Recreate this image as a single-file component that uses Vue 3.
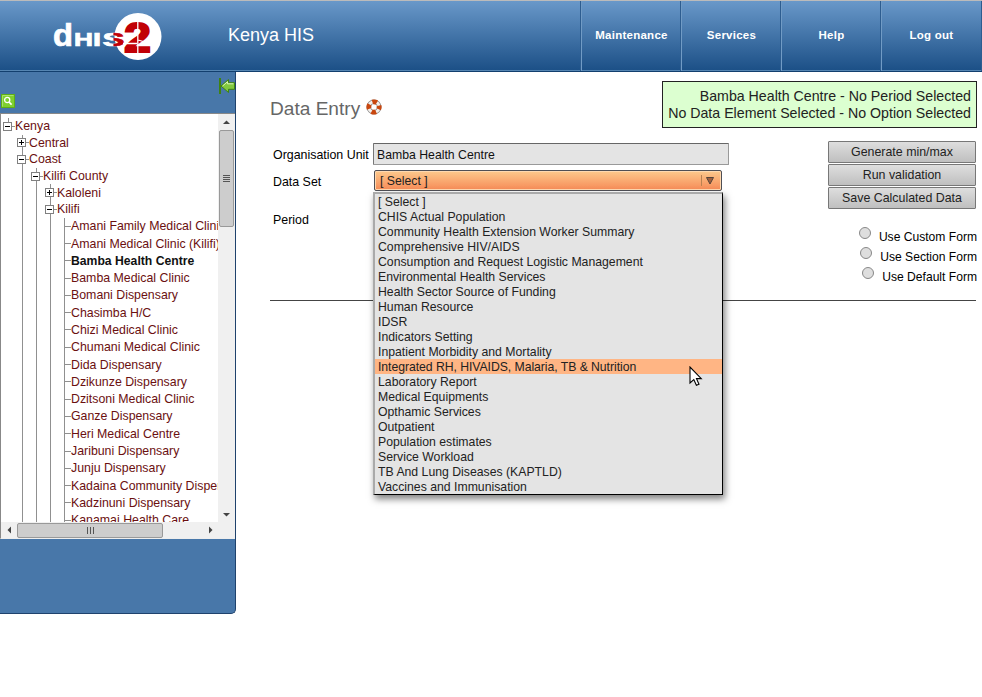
<script setup>
const nav = ['Maintenance', 'Services', 'Help', 'Log out']
const branches = [
  { level: 0, name: 'Kenya', open: true },
  { level: 1, name: 'Central', open: false },
  { level: 1, name: 'Coast', open: true },
  { level: 2, name: 'Kilifi County', open: true },
  { level: 3, name: 'Kaloleni', open: false },
  { level: 3, name: 'Kilifi', open: true },
]
const leaves = [
  'Amani Family Medical Clinic', 'Amani Medical Clinic (Kilifi)', 'Bamba Health Centre',
  'Bamba Medical Clinic', 'Bomani Dispensary', 'Chasimba H/C', 'Chizi Medical Clinic',
  'Chumani Medical Clinic', 'Dida Dispensary', 'Dzikunze Dispensary', 'Dzitsoni Medical Clinic',
  'Ganze Dispensary', 'Heri Medical Centre', 'Jaribuni Dispensary', 'Junju Dispensary',
  'Kadaina Community Dispensary', 'Kadzinuni Dispensary', 'Kanamai Health Care',
]
const options = [
  '[ Select ]', 'CHIS Actual Population', 'Community Health Extension Worker Summary',
  'Comprehensive HIV/AIDS', 'Consumption and Request Logistic Management',
  'Environmental Health Services', 'Health Sector Source of Funding', 'Human Resource', 'IDSR',
  'Indicators Setting', 'Inpatient Morbidity and Mortality',
  'Integrated RH, HIVAIDS, Malaria, TB & Nutrition', 'Laboratory Report', 'Medical Equipments',
  'Opthamic Services', 'Outpatient', 'Population estimates', 'Service Workload',
  'TB And Lung Diseases (KAPTLD)', 'Vaccines and Immunisation',
]
const hovered = 11
const actions = ['Generate min/max', 'Run validation', 'Save Calculated Data']
const forms = ['Use Custom Form', 'Use Section Form', 'Use Default Form']
</script>

<template>
  <div class="page">
    <header class="top">
      <svg class="logo" width="112" height="52" viewBox="0 0 112 52">
        <circle cx="85" cy="26.5" r="23.5" fill="#fff" />
        <g font-family="Liberation Sans" font-weight="bold" stroke-width=".7">
          <text x="0" y="36" font-size="31" fill="#fff" stroke="#fff" textLength="20" lengthAdjust="spacingAndGlyphs">d</text>
          <text x="21" y="36" font-size="18.5" fill="#fff" stroke="#fff" textLength="19" lengthAdjust="spacingAndGlyphs">H</text>
          <text x="40" y="36" font-size="18.5" fill="#fff" stroke="#fff" textLength="8" lengthAdjust="spacingAndGlyphs">I</text>
          <text x="49.5" y="36" font-size="18.5" fill="#fff" stroke="#fff" textLength="22" lengthAdjust="spacingAndGlyphs">S</text>
          <text class="red-half" x="49.5" y="36" font-size="18.5" fill="#c10006" stroke="#c10006" textLength="22" lengthAdjust="spacingAndGlyphs">S</text>
          <text x="71" y="42" font-size="43" fill="#c10006" stroke="#c10006" stroke-width="2" textLength="27" lengthAdjust="spacingAndGlyphs">2</text>
        </g>
        <path d="M84.8 9V44 M70 33.5H84 M85 30L99 34" stroke="#fff" stroke-width="1.3" fill="none" />
      </svg>
      <div class="brand">Kenya HIS</div>
      <nav class="nav">
        <a v-for="n in nav" :key="n">{{ n }}</a>
      </nav>
    </header>

    <div class="body">
      <aside class="side">
        <div class="tools">
          <svg width="14" height="14" viewBox="0 0 14 14">
            <rect x=".5" y=".5" width="13" height="13" fill="#7fd02f" stroke="#5fae16" />
            <path d="M1.5 12.5V1.5H12.5" fill="none" stroke="#a8e36a" />
            <circle cx="6.2" cy="6" r="2.6" fill="none" stroke="#fff" stroke-width="1.3" />
            <path d="M8 8L10.6 10.6" stroke="#fff" stroke-width="1.7" />
          </svg>
          <svg class="hide" width="16" height="16" viewBox="0 0 16 16">
            <rect x="0" y="0" width="2" height="16" fill="#3f8312" />
            <path d="M2 8L9.5 1.5V4.7H15.5V11.3H9.5V14.5Z" fill="#82c93f" stroke="#3f8312" />
            <path d="M3.6 8L8.5 3.7V5.8H14.4" fill="none" stroke="#d8f3b8" />
          </svg>
        </div>
        <div class="treebox">
          <div class="tree">
            <div v-for="b in branches" :key="b.name" class="row">
              <i v-for="k in b.level" :key="k" class="cell" :class="{ line: k > 1 }"></i>
              <i class="cell own" :class="b.level ? 'line' : 'stub'">
                <svg width="14" height="9" viewBox="0 0 14 9">
                  <rect x="2.5" y=".5" width="8" height="8" fill="#fff" stroke="#808080" />
                  <path d="M4 4.5H9" stroke="#000" />
                  <path v-if="!b.open" d="M6.5 2V7" stroke="#000" />
                  <path d="M11 4.5H14" stroke="#909090" />
                </svg>
              </i>
              <span>{{ b.name }}</span>
            </div>
            <div v-for="l in leaves" :key="l" class="row leaf" :class="{ sel: l === 'Bamba Health Centre' }">
              <i class="cell"></i><i class="cell line"></i><i class="cell line"></i><i class="cell line"></i>
              <i class="cell line own"><b class="tick"></b></i>
              <span>{{ l }}</span>
            </div>
          </div>
          <div class="vbar">
            <svg width="17" height="16" viewBox="0 0 17 16"><path d="M5 10L8.5 6.5L12 10Z" fill="#444" /></svg>
            <div class="vthumb"><i></i><i></i><i></i><i></i></div>
            <svg class="end" width="17" height="16" viewBox="0 0 17 16"><path d="M5 7L8.5 10.5L12 7Z" fill="#444" /></svg>
          </div>
          <div class="hbar">
            <svg width="16" height="16" viewBox="0 0 16 16"><path d="M10 4.5L6.5 8L10 11.5Z" fill="#444" /></svg>
            <div class="hthumb"><i></i><i></i><i></i></div>
            <svg class="end" width="16" height="16" viewBox="0 0 16 16"><path d="M7 4.5L10.5 8L7 11.5Z" fill="#444" /></svg>
          </div>
          <div class="corner"></div>
        </div>
      </aside>

      <main class="main">
        <div class="titlebar">
          <h1>Data Entry</h1>
          <svg class="help" width="16" height="16" viewBox="0 0 16 16">
            <circle cx="8" cy="8" r="5.2" fill="none" stroke="#8b8b8b" stroke-width="4.6" />
            <circle cx="8" cy="8" r="5.2" fill="none" stroke="#f5f0ec" stroke-width="3" />
            <circle cx="8" cy="8" r="5.2" fill="none" stroke="#c9470f" stroke-width="4.8" stroke-dasharray="4.6 3.568" stroke-dashoffset="2.3" />
          </svg>
          <div class="info">
            <div>Bamba Health Centre - No Period Selected</div>
            <div>No Data Element Selected - No Option Selected</div>
          </div>
        </div>

        <div class="work">
          <div class="form">
            <label>Organisation Unit</label>
            <div class="input">Bamba Health Centre</div>
            <label>Data Set</label>
            <div class="selectwrap">
              <div class="select">
                <span>[ Select ]</span>
                <svg width="14" height="12" viewBox="0 0 14 12">
                  <path d="M.5 0V11" stroke="#b98252" />
                  <path d="M5.5 2.5H12.5L9 9Z" fill="#a0603f" stroke="#55443a" />
                </svg>
              </div>
              <div class="menu">
                <div v-for="(o, i) in options" :key="o" class="opt" :class="{ hot: i === hovered }">{{ o }}</div>
                <svg class="cursor" width="14" height="22" viewBox="0 0 14 22">
                  <path d="M1 1V17L4.8 13.6L7.4 19.3L10 18.2L7.5 12.6H12.3Z" fill="#fff" stroke="#000" stroke-width="1.1" />
                </svg>
              </div>
            </div>
            <label class="period">Period</label>
          </div>
          <div class="right">
            <button v-for="a in actions" :key="a">{{ a }}</button>
            <div class="radios">
              <div v-for="f in forms" :key="f" class="radio"><i></i><span>{{ f }}</span></div>
            </div>
          </div>
        </div>
      </main>
    </div>
  </div>
</template>

<style>
body { margin: 0; background: #fff; }
</style>

<style scoped>
.page { width: 982px; height: 697px; overflow: hidden; font: 12.25px/15px "Liberation Sans", Arial, sans-serif; color: #000; box-sizing: border-box; }
.page * { box-sizing: border-box; }
svg { display: block; flex: none; }
.top { height: 72px; display: flex; border-top: 1px solid #bbb; border-bottom: 1px solid #123f6e; background: linear-gradient(#6998c9, #1b4f86); box-shadow: inset 0 -1px #5585b2; }
.logo { margin: 9px 0 0 53px; }
.red-half { clip-path: inset(0 0 0 50%); }
.brand { margin: 23px 0 0 63px; width: 200px; font-size: 18px; line-height: 23px; color: #fff; }
.nav { margin-left: auto; display: flex; padding-right: 1px; border-right: 1px solid #2d5d90; }
.nav a { width: 100px; border-left: 1px solid #2d5d90; box-shadow: inset 1px 0 #719bc5; color: #fff; font-weight: bold; font-size: 11.5px; letter-spacing: .25px; text-align: center; line-height: 68px; height: 70px; padding-left: 2px; }
.body { display: flex; }
.side { width: 236px; height: 542px; background: #4877a9; border-right: 1px solid #1f426c; border-bottom: 1px solid #1f426c; border-radius: 0 0 5px 0; }
.tools { height: 41px; display: flex; align-items: flex-start; justify-content: space-between; padding-left: 1px; }
.tools svg { margin-top: 22px; }
.tools .hide { margin-top: 6px; }
.treebox { height: 426px; background: #fff; border-top: 1px solid #888; border-left: 1px solid #888; display: grid; grid-template: 408px 16px / 217px 17px; border-bottom: 1px solid #eee; }
.tree { overflow: hidden; padding-top: 4px; font-size: 12.35px; }
.row { display: flex; height: 16.6px; align-items: center; white-space: nowrap; color: #6b1010; }
.row span { padding-top: 1px; }
.leaf { height: 17.3px; }
.sel span { color: #111; font-weight: bold; font-size: 12.2px; }
.cell { flex: none; width: 14px; align-self: stretch; display: flex; align-items: center; }
.line { background: linear-gradient(#909090, #909090) 7px 0 / 1px 100% no-repeat; }
.stub { background: linear-gradient(#909090, #909090) 7px 0 / 1px 50% no-repeat; }
.tick { width: 7px; height: 1px; margin-left: 7px; background: #909090; }
.vbar { background: #f0f0f0; display: flex; flex-direction: column; align-items: center; }
.vthumb { width: 15px; height: 97px; border: 1px solid #999; border-radius: 2px; background: #cdcdcd; display: flex; flex-direction: column; align-items: center; justify-content: center; gap: 1px; }
.vthumb i { width: 7px; height: 1px; background: #555; }
.end { margin-top: auto; }
.hbar { background: #f0f0f0; display: flex; align-items: center; }
.hthumb { width: 146px; height: 15px; border: 1px solid #999; border-radius: 2px; background: #cdcdcd; display: flex; align-items: center; justify-content: center; gap: 2px; }
.hthumb i { height: 7px; width: 1px; background: #555; }
.hbar .end { margin: 0 0 0 auto; }
.corner { background: #f0f0f0; }
.main { width: 746px; padding: 9px 5px 0 34px; }
.titlebar { display: flex; height: 47px; align-items: flex-start; }
h1 { margin: 16px 6px 0 0; font-size: 19.1px; line-height: 23px; font-weight: normal; color: #666; white-space: nowrap; }
.help { margin-top: 18px; }
.info { margin-left: auto; width: 315px; height: 47px; border: 1px solid #222; background: #dcffd0; padding: 6px 5px; text-align: right; font-size: 14.2px; line-height: 17px; color: #222; white-space: nowrap; }
.work { display: flex; justify-content: space-between; height: 173px; margin-right: 1px; border-bottom: 1px solid #444; padding-top: 13px; }
.form { display: grid; grid-template-columns: 100px 356px; grid-template-rows: 26px 28px 46px; align-items: center; padding: 0 0 0 3px; height: 100px; }
label { font-size: 12.4px; padding-top: 2px; }
.input { height: 22px; border: 1px solid #999; border-top-color: #666; border-left-color: #777; border-radius: 1px; background: #e4e4e4; padding-left: 3px; line-height: 22px; color: #111; }
.selectwrap { position: relative; width: 348px; margin-left: 1px; align-self: start; margin-top: 3px; }
.select { height: 21px; border: 1px solid #4f4f55; border-radius: 2px; background: linear-gradient(#fdc98c, #f68b57); box-shadow: inset 0 0 0 1px #ffd9b0; display: flex; align-items: center; justify-content: space-between; padding: 0 6px 0 5px; color: #222; }
.select span { padding-top: 2px; }
.menu { position: absolute; left: -1px; top: 22px; width: 350px; height: 303px; border: 1px solid #000; border-left: 2px solid #aaa; border-top: 2px solid #aaa; background: #e4e4e4; box-shadow: 2px 4px 7px rgba(0,0,0,.5); z-index: 2; }
.opt { height: 15px; padding-left: 3px; line-height: 16px; color: #222; white-space: nowrap; }
.hot { background: #ffb584; letter-spacing: -.06px; }
.cursor { position: absolute; left: 314px; top: 172px; }
.period { padding-top: 4px; }
.right { width: 149px; display: flex; flex-direction: column; margin-right: -1px; }
button { width: 148px; height: 22px; margin: 0 0 1px; padding: 0; border: 1px solid #777; border-radius: 1px; background: linear-gradient(#dedede, #bfbfbf); font: 12.4px/18px "Liberation Sans", Arial, sans-serif; color: #222; }
.radios { margin-top: 17px; font-size: 12.1px; }
.radio { display: flex; justify-content: flex-end; align-items: flex-start; gap: 8px; height: 20px; }
.radio i { width: 12px; height: 12px; border: 1px solid #888; border-radius: 50%; background: #dedede; }
.radio span { line-height: 20px; white-space: nowrap; }
</style>
